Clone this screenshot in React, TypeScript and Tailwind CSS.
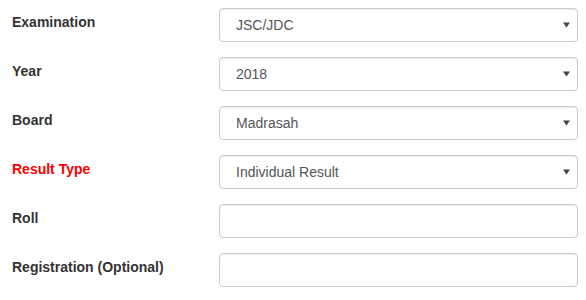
import React from 'react';

const rows = [
  { label: 'Examination', value: 'JSC/JDC', select: true },
  { label: 'Year', value: '2018', select: true },
  { label: 'Board', value: 'Madrasah', select: true },
  { label: 'Result Type', value: 'Individual Result', select: true, red: true },
  { label: 'Roll', value: '', select: false },
  { label: 'Registration (Optional)', value: '', select: false },
];

export default function App() {
  return (
    <div
      className="min-h-[300px] bg-white pl-[12px] pt-[8px] text-[14px] text-[#333]"
      style={{ fontFamily: 'Arial, "Liberation Sans", Helvetica, sans-serif' }}
    >
      <div className="flex flex-col gap-[15px]">
        {rows.map((row) => (
          <div key={row.label} className="flex items-start">
            <label
              className={`w-[207px] pt-[4px] font-bold leading-5 ${row.red ? 'text-[#ff0000]' : 'text-[#333]'}`}
            >
              {row.label}
            </label>
            {row.select ? (
              <div className="relative w-[359px]">
                <select
                  defaultValue={row.value}
                  className="block h-[34px] w-full appearance-none rounded-[4px] border border-[#ccc] bg-white pl-[16px] pr-6 text-[14px] text-[#555] shadow-[inset_0_1px_1px_rgba(0,0,0,0.075)] outline-none"
                >
                  <option>{row.value}</option>
                </select>
                <svg
                  className="pointer-events-none absolute right-[8px] top-[14px]"
                  width="7"
                  height="6"
                  viewBox="0 0 7 6"
                >
                  <path d="M0 0.5 H7 L3.5 5.5 Z" fill="#444" />
                </svg>
              </div>
            ) : (
              <input
                type="text"
                className="block h-[34px] w-[359px] rounded-[4px] border border-[#ccc] bg-white px-3 text-[14px] text-[#555] shadow-[inset_0_1px_1px_rgba(0,0,0,0.075)] outline-none"
              />
            )}
          </div>
        ))}
      </div>
    </div>
  );
}
